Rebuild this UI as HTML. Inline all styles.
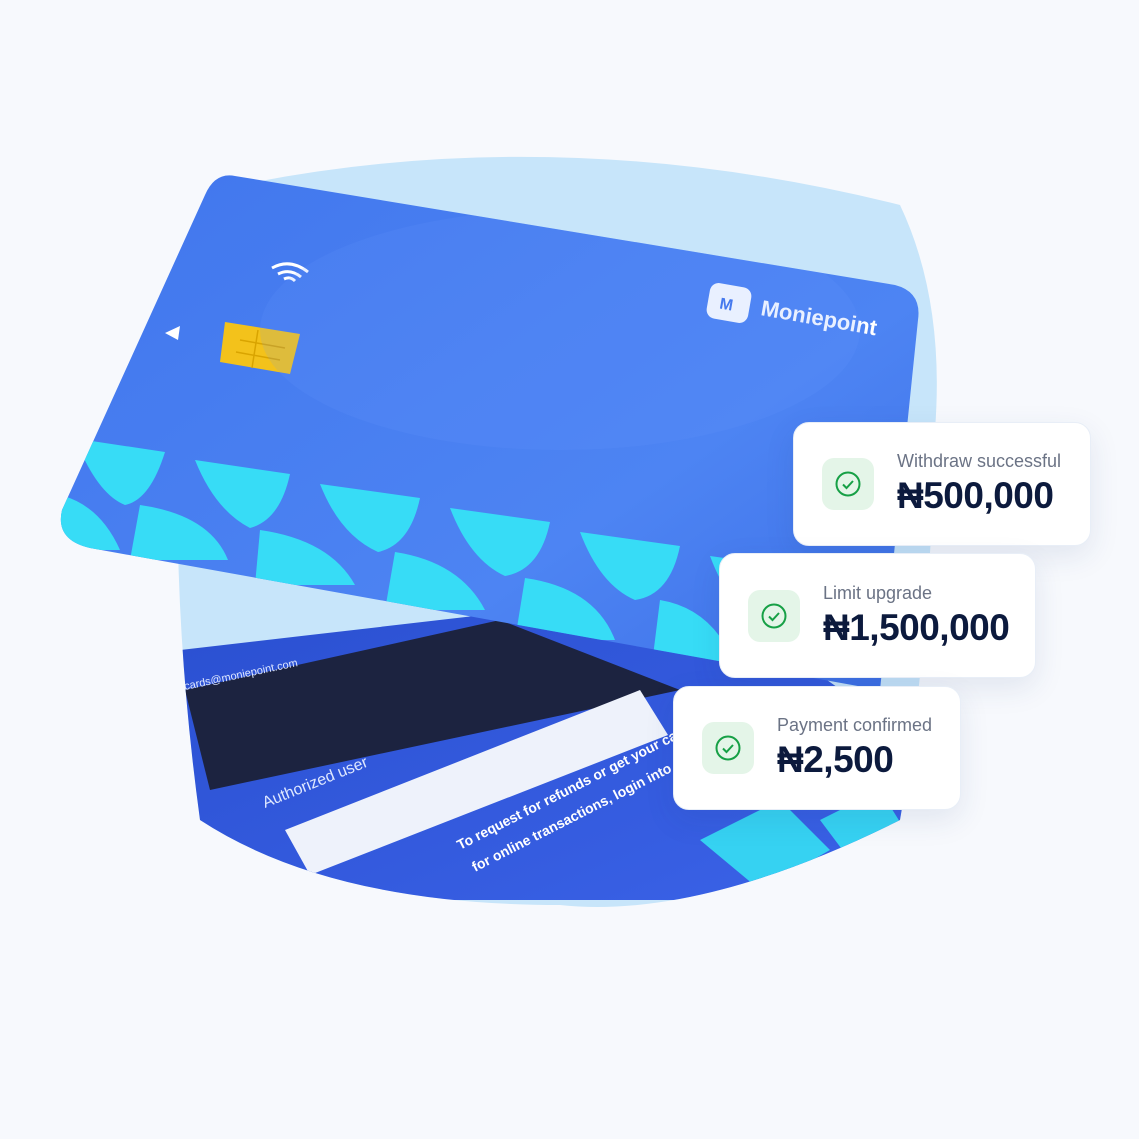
<!DOCTYPE html>
<html><head><meta charset="utf-8">
<style>
html,body{margin:0;padding:0;background:#f7f9fd;}
body{width:1139px;height:1139px;position:relative;overflow:hidden;font-family:"Liberation Sans",sans-serif;}
svg{position:absolute;left:0;top:0;}
.n{position:absolute;background:#fff;border-radius:16px;box-shadow:0 10px 30px rgba(30,60,120,0.10);border:1px solid #e8eef7;}
.ic{position:absolute;width:52px;height:52px;border-radius:12px;background:#e4f5e8;}
.ic svg{position:absolute;left:13px;top:13px;}
.lb{position:absolute;color:#6b7385;font-size:18px;}
.am{position:absolute;color:#0c1a3d;font-size:37px;font-weight:bold;letter-spacing:-0.5px;}
</style></head><body>
<svg width="1139" height="1139" viewBox="0 0 1139 1139">
<defs>
<linearGradient id="fc" x1="0" y1="0" x2="1" y2="1">
<stop offset="0" stop-color="#3f74ec"/><stop offset="0.6" stop-color="#4d84f3"/><stop offset="1" stop-color="#3565e0"/>
</linearGradient>
<linearGradient id="bc" x1="0" y1="0" x2="1" y2="1">
<stop offset="0" stop-color="#2a4fd0"/><stop offset="1" stop-color="#3b63e8"/>
</linearGradient>
<clipPath id="blob"><path d="M240 185 Q560 120 900 205 Q945 300 935 430 Q930 650 900 820 Q700 920 560 905 Q330 905 200 820 Q170 600 180 400 Q190 250 240 185Z"/></clipPath>
<clipPath id="card"><path d="M235 176 L895 285 Q922 292 918 320 L880 690 L90 548 Q55 540 62 510 L205 195 Q215 172 235 176Z"/></clipPath>
</defs>
<path d="M240 185 Q560 120 900 205 Q945 300 935 430 Q930 650 900 820 Q700 920 560 905 Q330 905 200 820 Q170 600 180 400 Q190 250 240 185Z" fill="#c7e5fa"/>
<g clip-path="url(#blob)">
<path d="M180 650 L700 590 L940 760 L900 900 L180 900Z" fill="url(#bc)"/>
<path d="M185 690 L500 620 L680 690 L210 790Z" fill="#1c2340"/>
<path d="M285 830 L640 690 L668 735 L310 875Z" fill="#eef2fb"/>
<text x="265" y="808" fill="#dfe8ff" font-size="16" transform="rotate(-22 265 808)">Authorized user</text>
<text x="185" y="690" fill="#dfe8ff" font-size="11" transform="rotate(-12 185 690)">cards@moniepoint.com</text>
<text x="460" y="850" fill="#fff" font-size="14" font-weight="bold" transform="rotate(-27 460 850)">To request for refunds or get your card</text>
<text x="475" y="872" fill="#fff" font-size="14" font-weight="bold" transform="rotate(-27 475 872)">for online transactions, login into</text>
<path d="M700 840 L780 800 L830 850 L760 890Z" fill="#36d2f2"/>
<path d="M820 820 L880 790 L905 830 L850 860Z" fill="#36d2f2"/>
</g>
<g clip-path="url(#card)">
<rect x="0" y="100" width="1000" height="700" fill="url(#fc)"/>
<g fill="#37dcf6">
<path d="M85 440 L165 452 Q150 500 125 505 Q100 495 80 450Z"/>
<path d="M195 460 L290 474 Q280 520 250 528 Q215 510 195 460Z"/>
<path d="M320 484 L420 498 Q410 545 378 552 Q340 535 320 484Z"/>
<path d="M450 508 L550 522 Q540 570 505 576 Q470 560 450 508Z"/>
<path d="M580 532 L680 546 Q670 595 635 600 Q600 585 580 532Z"/>
<path d="M710 556 L810 570 Q800 620 765 625 Q730 610 710 556Z"/>
<path d="M60 495 Q100 505 120 550 L60 550Z"/>
<path d="M140 505 Q210 515 228 560 L130 560Z"/>
<path d="M260 530 Q330 540 355 585 L255 585Z"/>
<path d="M395 552 Q460 562 485 610 L385 610Z"/>
<path d="M525 578 Q595 588 615 640 L515 640Z"/>
<path d="M660 600 Q720 610 740 680 L650 680Z"/>
</g>
<path d="M225 322 L300 334 L290 374 L220 362Z" fill="#f3c21b"/>
<path d="M240 340 L285 348 M236 352 L280 360 M258 330 L252 368" stroke="#d9a400" stroke-width="1.5" fill="none"/>
<path d="M165 333 L180 326 L178 340Z" fill="#fff"/>
<path d="M272 268 Q290 258 308 272 M278 274 Q290 268 301 277 M284 279 Q290 276 295 281" stroke="#fff" stroke-width="3" fill="none"/>
<rect x="708" y="285" width="42" height="36" rx="9" fill="#fff" transform="rotate(10 729 303)"/>
<text x="720" y="310" fill="#3f74ec" font-size="16" font-weight="bold" transform="rotate(10 729 303)">M</text>
<text x="760" y="315" fill="#fff" font-size="22" font-weight="bold" transform="rotate(10 760 315)">Moniepoint</text>
<ellipse cx="560" cy="330" rx="300" ry="120" fill="#6a9cff" opacity="0.15"/>
</g>
</svg>

<div class="n" style="left:793px;top:422px;width:296px;height:122px;">
<div class="ic" style="left:28px;top:35px;"><svg width="26" height="26" viewBox="0 0 26 26"><circle cx="13" cy="13" r="11.5" fill="none" stroke="#17a046" stroke-width="2"/><path d="M8 13.5l3.5 3.5 6.5-7" fill="none" stroke="#17a046" stroke-width="2"/></svg></div>
<div class="lb" style="left:103px;top:28px;">Withdraw successful</div>
<div class="am" style="left:103px;top:52px;">₦500,000</div>
</div>
<div class="n" style="left:719px;top:553px;width:315px;height:123px;">
<div class="ic" style="left:28px;top:36px;"><svg width="26" height="26" viewBox="0 0 26 26"><circle cx="13" cy="13" r="11.5" fill="none" stroke="#17a046" stroke-width="2"/><path d="M8 13.5l3.5 3.5 6.5-7" fill="none" stroke="#17a046" stroke-width="2"/></svg></div>
<div class="lb" style="left:103px;top:29px;">Limit upgrade</div>
<div class="am" style="left:103px;top:53px;">₦1,500,000</div>
</div>
<div class="n" style="left:673px;top:686px;width:286px;height:122px;">
<div class="ic" style="left:28px;top:35px;"><svg width="26" height="26" viewBox="0 0 26 26"><circle cx="13" cy="13" r="11.5" fill="none" stroke="#17a046" stroke-width="2"/><path d="M8 13.5l3.5 3.5 6.5-7" fill="none" stroke="#17a046" stroke-width="2"/></svg></div>
<div class="lb" style="left:103px;top:28px;">Payment confirmed</div>
<div class="am" style="left:103px;top:52px;">₦2,500</div>
</div>
</body></html>
